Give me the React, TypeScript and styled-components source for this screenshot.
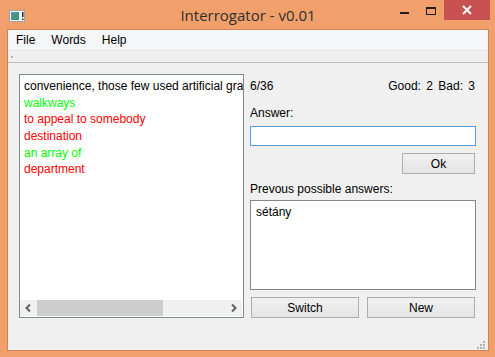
import styled, { createGlobalStyle } from "styled-components";

const GlobalStyle = createGlobalStyle`
  html, body {
    margin: 0;
    padding: 0;
    background: #f1a06b;
  }
  body {
    font-family: "Liberation Sans", Arial, sans-serif;
  }
`;

const Window = styled.div`
  width: 495px;
  height: 357px;
  background: #f1a06b;
  display: flex;
  flex-direction: column;
  box-sizing: border-box;
  padding: 0 6px 6px 7px;
`;

const TitleBar = styled.div`
  height: 29px;
  display: grid;
  grid-template-columns: 1fr auto 1fr;
  align-items: start;
`;

const TitleIcon = styled.div`
  padding: 8px 0 0 2px;
  height: 12px;
`;

const Title = styled.div`
  font-family: "Open Sans", "Liberation Sans", sans-serif;
  font-size: 15px;
  color: #2f2f2f;
  line-height: 30px;
  white-space: nowrap;
`;

const Controls = styled.div`
  justify-self: end;
  display: flex;
  align-items: flex-start;
  margin-right: -1px;
`;

const CtrlButton = styled.div<{ $close?: boolean; $w: number }>`
  width: ${({ $w }) => $w}px;
  height: 20px;
  display: flex;
  align-items: center;
  justify-content: center;
  background: ${({ $close }) => ($close ? "#c75050" : "transparent")};
`;

const Client = styled.div`
  flex: 1;
  display: flex;
  flex-direction: column;
  background: #f0f0f0;
  border: 1px solid #cf8656;
`;

const MenuBar = styled.div`
  height: 20px;
  background: #f5f6f7;
  border-bottom: 1px solid #e6e7e8;
  display: flex;
  align-items: center;
  padding-left: 1px;
`;

const MenuItem = styled.span`
  font-size: 12px;
  color: #000;
  padding: 0 7px;
  margin-right: 2px;
`;

const ToolStrip = styled.div`
  height: 11px;
  border-bottom: 1px solid #bcbcbc;
  display: flex;
  align-items: center;
  padding-left: 3px;
`;

const Grip = styled.div`
  width: 2px;
  height: 2px;
  background: #b5b5b5;
`;

const Body = styled.div`
  flex: 1;
  display: grid;
  grid-template-columns: 225px 226px;
  column-gap: 6px;
  padding: 11px 0 0 11px;
  align-items: start;
`;

const ListBox = styled.div`
  height: 244px;
  box-sizing: border-box;
  border: 1px solid #828790;
  background: #fff;
  display: flex;
  flex-direction: column;
  overflow: hidden;
`;

const ListItems = styled.div`
  flex: 1;
  padding: 3px 0 0 4px;
  overflow: hidden;
`;

const ListLine = styled.div<{ $tone: "plain" | "good" | "bad" }>`
  font-size: 12px;
  line-height: 16.67px;
  white-space: nowrap;
  overflow: hidden;
  color: ${({ $tone }) =>
    $tone === "good" ? "#00ff00" : $tone === "bad" ? "#ff0000" : "#000"};
`;

const HScroll = styled.div`
  height: 16px;
  margin: 0 1px 1px 0;
  background: #f0f0f0;
  display: flex;
  align-items: stretch;
`;

const ScrollArrow = styled.div`
  width: 17px;
  display: flex;
  align-items: center;
  justify-content: center;
`;

const ScrollTrack = styled.div`
  flex: 1;
  display: flex;
`;

const ScrollThumb = styled.div`
  width: 126px;
  background: #cdcdcd;
`;

const Side = styled.div`
  display: flex;
  flex-direction: column;
`;

const Label = styled.div<{ $top: number }>`
  font-size: 12px;
  line-height: 16px;
  color: #000;
  margin-top: ${({ $top }) => $top}px;
`;

const StatsRow = styled.div`
  display: flex;
  justify-content: space-between;
  font-size: 12px;
  line-height: 16px;
  margin-top: 4px;
  padding-right: 1px;
  word-spacing: 2px;
`;

const Input = styled.div`
  height: 20px;
  box-sizing: border-box;
  margin-top: 5px;
  border: 1px solid #569de5;
  background: #fff;
`;

const Button = styled.div`
  height: 21px;
  box-sizing: border-box;
  border: 1px solid #adadad;
  background: linear-gradient(#f0f0f0, #e5e5e5);
  display: flex;
  align-items: center;
  justify-content: center;
  font-size: 12px;
  color: #000;
`;

const OkButton = styled(Button)`
  width: 73px;
  align-self: flex-end;
  margin: 7px 1px 0 0;
`;

const AnswersBox = styled.div`
  height: 90px;
  box-sizing: border-box;
  margin-top: 3px;
  border: 1px solid #828790;
  background: #fff;
  padding: 3px 0 0 5px;
  font-size: 12px;
  line-height: 16px;
`;

const ButtonRow = styled.div`
  display: grid;
  grid-template-columns: 108px 108px;
  column-gap: 8px;
  margin: 7px 1px 0 1px;
`;

const StatusBar = styled.div`
  height: 31px;
  display: flex;
  justify-content: flex-end;
  align-items: flex-end;
  padding: 0 3px 1px 0;
`;

const listLines: { text: string; tone: "plain" | "good" | "bad" }[] = [
  { text: "convenience, those few used artificial gra", tone: "plain" },
  { text: "walkways", tone: "good" },
  { text: "to appeal to somebody", tone: "bad" },
  { text: "destination", tone: "bad" },
  { text: "an array of", tone: "good" },
  { text: "department", tone: "bad" },
];

function AppIcon() {
  return (
    <svg width="17" height="12" viewBox="0 0 17 12">
      <rect x="0.5" y="0.5" width="15" height="11" fill="#f7f7f7" stroke="#9aa4ad" />
      <defs>
        <linearGradient id="ig" x1="0" y1="0" x2="1" y2="1">
          <stop offset="0" stopColor="#5f8fa8" />
          <stop offset="1" stopColor="#2f9a6e" />
        </linearGradient>
      </defs>
      <rect x="2" y="2" width="8" height="8" fill="url(#ig)" />
      <rect x="13" y="2" width="1.5" height="5" fill="#222" />
      <rect x="13" y="8.5" width="1.5" height="1.5" fill="#222" />
    </svg>
  );
}

export default function App() {
  return (
    <>
      <GlobalStyle />
      <Window>
        <TitleBar>
          <TitleIcon>
            <AppIcon />
          </TitleIcon>
          <Title>Interrogator - v0.01</Title>
          <Controls>
            <CtrlButton $w={26}>
              <svg width="9" height="20" viewBox="0 0 9 20">
                <rect x="0" y="12" width="9" height="2" fill="#1e1e1e" />
              </svg>
            </CtrlButton>
            <CtrlButton $w={27}>
              <svg width="10" height="20" viewBox="0 0 10 20">
                <rect x="0.5" y="7.5" width="9" height="7" fill="none" stroke="#1e1e1e" />
                <rect x="0" y="7" width="10" height="2" fill="#1e1e1e" />
              </svg>
            </CtrlButton>
            <CtrlButton $w={46} $close>
              <svg width="10" height="10" viewBox="0 0 10 10">
                <path d="M1 1 L9 9 M9 1 L1 9" stroke="#fff" strokeWidth="2" />
              </svg>
            </CtrlButton>
          </Controls>
        </TitleBar>
        <Client>
          <MenuBar>
            <MenuItem>File</MenuItem>
            <MenuItem>Words</MenuItem>
            <MenuItem>Help</MenuItem>
          </MenuBar>
          <ToolStrip>
            <Grip />
          </ToolStrip>
          <Body>
            <ListBox>
              <ListItems>
                {listLines.map((l) => (
                  <ListLine key={l.text} $tone={l.tone}>
                    {l.text}
                  </ListLine>
                ))}
              </ListItems>
              <HScroll>
                <ScrollArrow>
                  <svg width="7" height="8" viewBox="0 0 7 8">
                    <path d="M5 0.5 L1.5 4 L5 7.5" stroke="#606060" strokeWidth="2" fill="none" />
                  </svg>
                </ScrollArrow>
                <ScrollTrack>
                  <ScrollThumb />
                </ScrollTrack>
                <ScrollArrow>
                  <svg width="7" height="8" viewBox="0 0 7 8">
                    <path d="M2 0.5 L5.5 4 L2 7.5" stroke="#606060" strokeWidth="2" fill="none" />
                  </svg>
                </ScrollArrow>
              </HScroll>
            </ListBox>
            <Side>
              <StatsRow>
                <span>6/36</span>
                <span>Good: 2 Bad: 3</span>
              </StatsRow>
              <Label $top={11}>Answer:</Label>
              <Input />
              <OkButton>Ok</OkButton>
              <Label $top={7}>Prevous possible answers:</Label>
              <AnswersBox>sétány</AnswersBox>
              <ButtonRow>
                <Button>Switch</Button>
                <Button>New</Button>
              </ButtonRow>
            </Side>
          </Body>
          <StatusBar>
            <svg width="8" height="8" viewBox="0 0 8 8">
              <rect x="6" y="0" width="2" height="2" fill="#b0b0b0" />
              <rect x="3" y="3" width="2" height="2" fill="#b0b0b0" />
              <rect x="6" y="3" width="2" height="2" fill="#b0b0b0" />
              <rect x="0" y="6" width="2" height="2" fill="#b0b0b0" />
              <rect x="3" y="6" width="2" height="2" fill="#b0b0b0" />
              <rect x="6" y="6" width="2" height="2" fill="#b0b0b0" />
            </svg>
          </StatusBar>
        </Client>
      </Window>
    </>
  );
}
